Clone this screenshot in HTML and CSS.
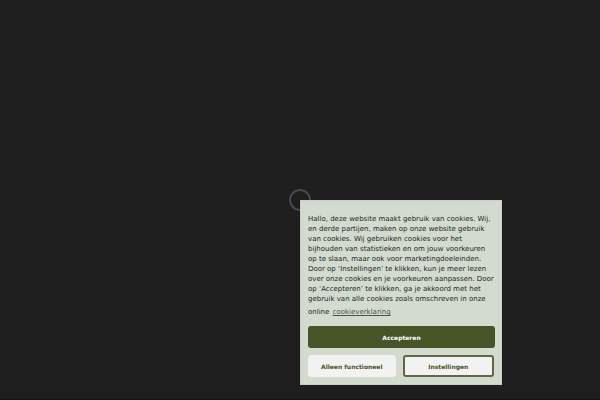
FILE: index.html
```html
<!DOCTYPE html>
<html lang="nl">
<head>
  <meta charset="UTF-8" />
  <meta name="viewport" content="width=device-width, initial-scale=1.0" />
  <title>Cookies</title>
  <link rel="stylesheet" href="styles.css">
</head>
<body>
  <main class="page">
    <div class="loader"></div>
  </main>
  <footer class="footer"></footer>

  <div class="cookie-popup" role="dialog" aria-label="Cookies">
    <p class="cookie-text">
      Hallo, deze website maakt gebruik van cookies. Wij, en derde partijen, maken op onze website gebruik van cookies. Wij gebruiken cookies voor het bijhouden van statistieken en om jouw voorkeuren op te slaan, maar ook voor marketingdoeleinden. Door op ‘Instellingen’ te klikken, kun je meer lezen over onze cookies en je voorkeuren aanpassen. Door op ‘Accepteren’ te klikken, ga je akkoord met het gebruik van alle cookies zoals omschreven in onze online <a href="#" class="cookie-link">cookieverklaring</a>
    </p>
    <button type="button" class="btn btn-accept">Accepteren</button>
    <div class="btn-row">
      <button type="button" class="btn btn-functional">Alleen functioneel</button>
      <button type="button" class="btn btn-settings">Instellingen</button>
    </div>
  </div>
</body>
</html>
```
FILE: styles.css
```css
* {
  box-sizing: border-box;
}

body {
  margin: 0;
  min-height: 100vh;
  display: flex;
  flex-direction: column;
  background-color: #1e1e1e;
  font-family: "DejaVu Sans", Verdana, sans-serif;
}

.page {
  flex: 1;
  display: flex;
  align-items: center;
  justify-content: center;
}

.loader {
  width: 22px;
  height: 22px;
  border: 2px solid #48484a;
  border-radius: 50%;
}

.footer {
  height: 1px;
  background-color: #1c1018;
}

.cookie-popup {
  position: fixed;
  left: 50%;
  bottom: 15px;
  width: 202px;
  padding: 13px 6px 7px 7px;
  background-color: #d3dbcf;
  border: 1px solid #c9cfc6;
}

.cookie-text {
  margin: 0 0 6px;
  font-size: 7px;
  line-height: 10px;
  color: #1f241d;
}

.cookie-link {
  display: inline-block;
  padding: 3px 1px;
  color: #4a5444;
}

.btn {
  display: block;
  height: 22px;
  padding: 0;
  border: none;
  border-radius: 3px;
  font-family: inherit;
  font-size: 6px;
  font-weight: bold;
  cursor: pointer;
}

.btn-accept {
  width: 100%;
  margin-bottom: 7px;
  background-color: #465427;
  color: #fff;
}

.btn-row {
  display: flex;
  gap: 7px;
  padding-right: 1px;
}

.btn-row .btn {
  flex: 1;
  background-color: #f2f2f2;
  color: #465427;
}

.btn-row .btn-settings {
  border: 2px solid #5c6846;
}
```
